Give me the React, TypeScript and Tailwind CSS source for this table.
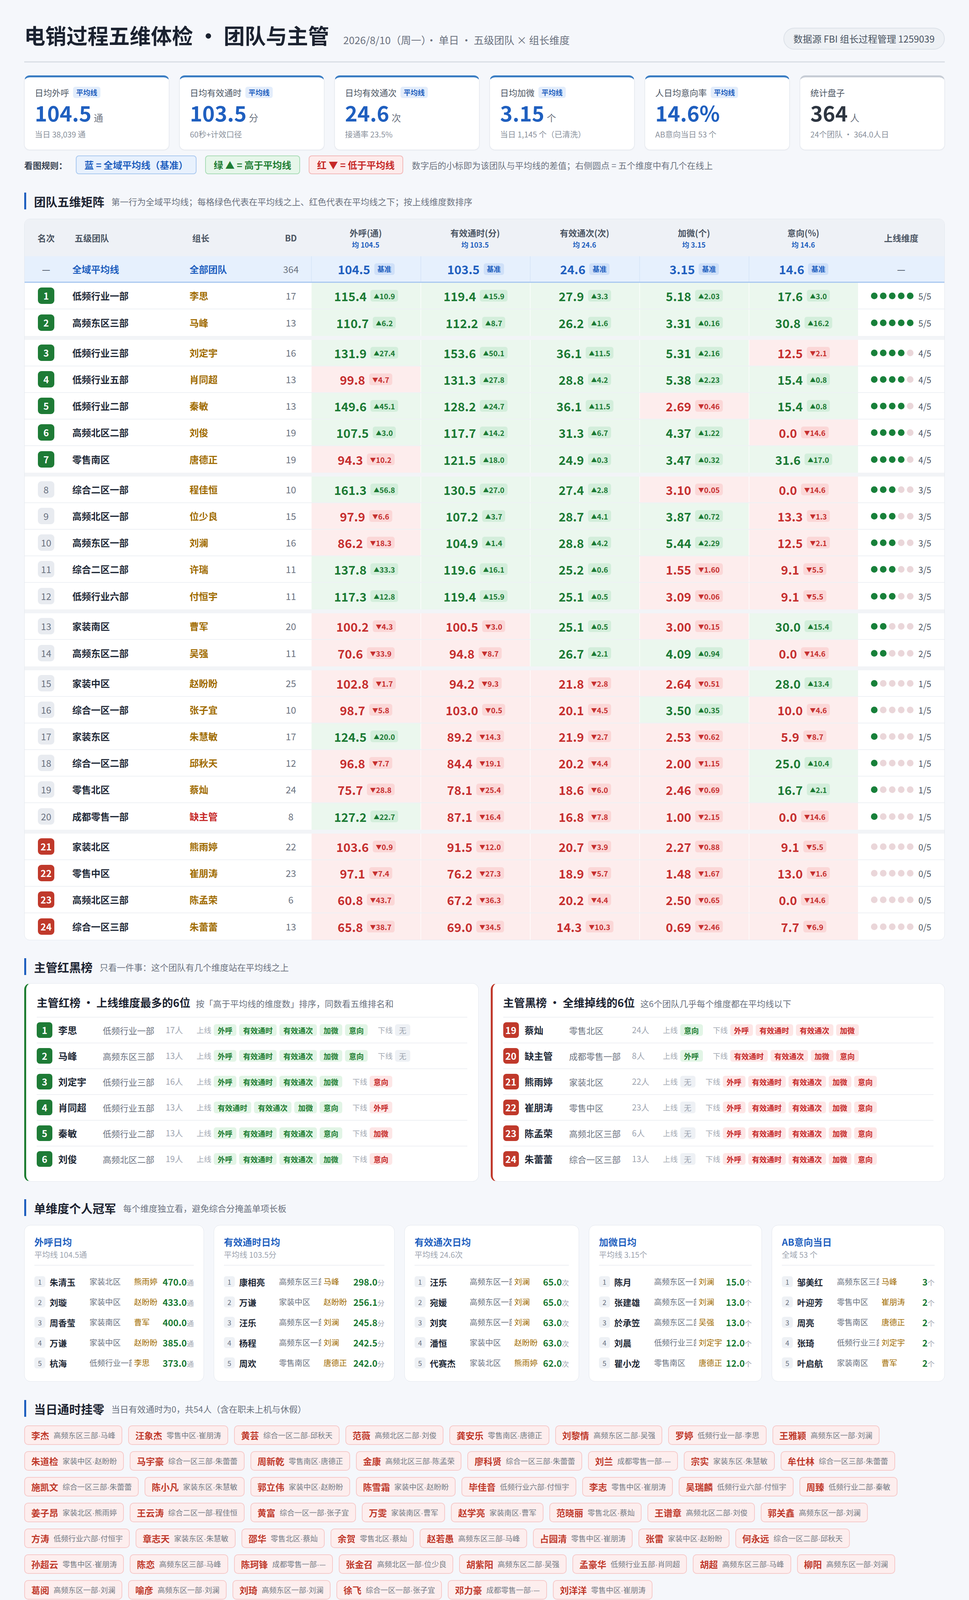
import React from "react";

type TRow = [number, string, string, number, string[]];

const TABLE: TRow[] = [
  [1, "低频行业一部", "李思", 17, ["115.4/+10.9", "119.4/+15.9", "27.9/+3.3", "5.18/+2.03", "17.6/+3.0"]],
  [2, "高频东区三部", "马峰", 13, ["110.7/+6.2", "112.2/+8.7", "26.2/+1.6", "3.31/+0.16", "30.8/+16.2"]],
  [3, "低频行业三部", "刘定宇", 16, ["131.9/+27.4", "153.6/+50.1", "36.1/+11.5", "5.31/+2.16", "12.5/-2.1"]],
  [4, "低频行业五部", "肖同超", 13, ["99.8/-4.7", "131.3/+27.8", "28.8/+4.2", "5.38/+2.23", "15.4/+0.8"]],
  [5, "低频行业二部", "秦敏", 13, ["149.6/+45.1", "128.2/+24.7", "36.1/+11.5", "2.69/-0.46", "15.4/+0.8"]],
  [6, "高频北区二部", "刘俊", 19, ["107.5/+3.0", "117.7/+14.2", "31.3/+6.7", "4.37/+1.22", "0.0/-14.6"]],
  [7, "零售南区", "唐德正", 19, ["94.3/-10.2", "121.5/+18.0", "24.9/+0.3", "3.47/+0.32", "31.6/+17.0"]],
  [8, "综合二区一部", "程佳恒", 10, ["161.3/+56.8", "130.5/+27.0", "27.4/+2.8", "3.10/-0.05", "0.0/-14.6"]],
  [9, "高频北区一部", "位少良", 15, ["97.9/-6.6", "107.2/+3.7", "28.7/+4.1", "3.87/+0.72", "13.3/-1.3"]],
  [10, "高频东区一部", "刘澜", 16, ["86.2/-18.3", "104.9/+1.4", "28.8/+4.2", "5.44/+2.29", "12.5/-2.1"]],
  [11, "综合二区二部", "许瑞", 11, ["137.8/+33.3", "119.6/+16.1", "25.2/+0.6", "1.55/-1.60", "9.1/-5.5"]],
  [12, "低频行业六部", "付恒宇", 11, ["117.3/+12.8", "119.4/+15.9", "25.1/+0.5", "3.09/-0.06", "9.1/-5.5"]],
  [13, "家装南区", "曹军", 20, ["100.2/-4.3", "100.5/-3.0", "25.1/+0.5", "3.00/-0.15", "30.0/+15.4"]],
  [14, "高频东区二部", "吴强", 11, ["70.6/-33.9", "94.8/-8.7", "26.7/+2.1", "4.09/+0.94", "0.0/-14.6"]],
  [15, "家装中区", "赵盼盼", 25, ["102.8/-1.7", "94.2/-9.3", "21.8/-2.8", "2.64/-0.51", "28.0/+13.4"]],
  [16, "综合一区一部", "张子宜", 10, ["98.7/-5.8", "103.0/-0.5", "20.1/-4.5", "3.50/+0.35", "10.0/-4.6"]],
  [17, "家装东区", "朱慧敏", 17, ["124.5/+20.0", "89.2/-14.3", "21.9/-2.7", "2.53/-0.62", "5.9/-8.7"]],
  [18, "综合一区二部", "邱秋天", 12, ["96.8/-7.7", "84.4/-19.1", "20.2/-4.4", "2.00/-1.15", "25.0/+10.4"]],
  [19, "零售北区", "蔡灿", 24, ["75.7/-28.8", "78.1/-25.4", "18.6/-6.0", "2.46/-0.69", "16.7/+2.1"]],
  [20, "成都零售一部", "缺主管", 8, ["127.2/+22.7", "87.1/-16.4", "16.8/-7.8", "1.00/-2.15", "0.0/-14.6"]],
  [21, "家装北区", "熊雨婷", 22, ["103.6/-0.9", "91.5/-12.0", "20.7/-3.9", "2.27/-0.88", "9.1/-5.5"]],
  [22, "零售中区", "崔朋涛", 23, ["97.1/-7.4", "76.2/-27.3", "18.9/-5.7", "1.48/-1.67", "13.0/-1.6"]],
  [23, "高频北区三部", "陈孟荣", 6, ["60.8/-43.7", "67.2/-36.3", "20.2/-4.4", "2.50/-0.65", "0.0/-14.6"]],
  [24, "综合一区三部", "朱蕾蕾", 13, ["65.8/-38.7", "69.0/-34.5", "14.3/-10.3", "0.69/-2.46", "7.7/-6.9"]],
];

const METRICS = [
  ["外呼(通)", "104.5"],
  ["有效通时(分)", "103.5"],
  ["有效通次(次)", "24.6"],
  ["加微(个)", "3.15"],
  ["意向(%)", "14.6"],
];

const KPIS = [
  { label: "日均外呼", avg: true, value: "104.5", unit: "通", sub: "当日 38,039 通" },
  { label: "日均有效通时", avg: true, value: "103.5", unit: "分", sub: "60秒+计效口径" },
  { label: "日均有效通次", avg: true, value: "24.6", unit: "次", sub: "接通率 23.5%" },
  { label: "日均加微", avg: true, value: "3.15", unit: "个", sub: "当日 1,145 个（已清洗）" },
  { label: "人日均意向率", avg: true, value: "14.6%", unit: "", sub: "AB意向当日 53 个" },
  { label: "统计盘子", avg: false, value: "364", unit: "人", sub: "24个团队 · 364.0人日" },
];

const ALL = ["外呼", "有效通时", "有效通次", "加微", "意向"];

const RED_LIST = [
  { rank: 1, name: "李思", team: "低频行业一部", count: "17人", ups: ALL, downs: [] as string[] },
  { rank: 2, name: "马峰", team: "高频东区三部", count: "13人", ups: ALL, downs: [] as string[] },
  { rank: 3, name: "刘定宇", team: "低频行业三部", count: "16人", ups: ["外呼", "有效通时", "有效通次", "加微"], downs: ["意向"] },
  { rank: 4, name: "肖同超", team: "低频行业五部", count: "13人", ups: ["有效通时", "有效通次", "加微", "意向"], downs: ["外呼"] },
  { rank: 5, name: "秦敏", team: "低频行业二部", count: "13人", ups: ["外呼", "有效通时", "有效通次", "意向"], downs: ["加微"] },
  { rank: 6, name: "刘俊", team: "高频北区二部", count: "19人", ups: ["外呼", "有效通时", "有效通次", "加微"], downs: ["意向"] },
];

const BLACK_LIST = [
  { rank: 19, name: "蔡灿", team: "零售北区", count: "24人", ups: ["意向"], downs: ["外呼", "有效通时", "有效通次", "加微"] },
  { rank: 20, name: "缺主管", team: "成都零售一部", count: "8人", ups: ["外呼"], downs: ["有效通时", "有效通次", "加微", "意向"] },
  { rank: 21, name: "熊雨婷", team: "家装北区", count: "22人", ups: [] as string[], downs: ALL },
  { rank: 22, name: "崔朋涛", team: "零售中区", count: "23人", ups: [] as string[], downs: ALL },
  { rank: 23, name: "陈孟荣", team: "高频北区三部", count: "6人", ups: [] as string[], downs: ALL },
  { rank: 24, name: "朱蕾蕾", team: "综合一区三部", count: "13人", ups: [] as string[], downs: ALL },
];

const CHAMPS = [
  {
    title: "外呼日均", sub: "平均线 104.5通", unit: "通",
    rows: [["朱清玉", "家装北区", "熊雨婷", "470.0"], ["刘璇", "家装中区", "赵盼盼", "433.0"], ["周香莹", "家装南区", "曹军", "400.0"], ["万谦", "家装中区", "赵盼盼", "385.0"], ["杭海", "低频行业一部", "李思", "373.0"]],
  },
  {
    title: "有效通时日均", sub: "平均线 103.5分", unit: "分",
    rows: [["康相亮", "高频东区三部", "马峰", "298.0"], ["万谦", "家装中区", "赵盼盼", "256.1"], ["汪乐", "高频东区一部", "刘澜", "245.8"], ["杨程", "高频东区一部", "刘澜", "242.5"], ["周欢", "零售南区", "唐德正", "242.0"]],
  },
  {
    title: "有效通次日均", sub: "平均线 24.6次", unit: "次",
    rows: [["汪乐", "高频东区一部", "刘澜", "65.0"], ["宛媛", "高频东区一部", "刘澜", "65.0"], ["刘爽", "高频东区一部", "刘澜", "63.0"], ["潘恒", "家装中区", "赵盼盼", "63.0"], ["代赛杰", "家装北区", "熊雨婷", "62.0"]],
  },
  {
    title: "加微日均", sub: "平均线 3.15个", unit: "个",
    rows: [["陈月", "高频东区一部", "刘澜", "15.0"], ["张建雄", "高频东区一部", "刘澜", "13.0"], ["於承笠", "高频东区二部", "吴强", "13.0"], ["刘晨", "低频行业三部", "刘定宇", "12.0"], ["瞿小龙", "零售南区", "唐德正", "12.0"]],
  },
  {
    title: "AB意向当日", sub: "全域 53 个", unit: "个",
    rows: [["邹美红", "高频东区三部", "马峰", "3"], ["叶迎芳", "零售中区", "崔朋涛", "2"], ["周亮", "零售南区", "唐德正", "2"], ["张琦", "低频行业三部", "刘定宇", "2"], ["叶启航", "家装南区", "曹军", "2"]],
  },
];

const ZERO = [
  ["李杰", "高频东区三部·马峰"], ["汪象杰", "零售中区·崔朋涛"], ["黄芸", "综合一区二部·邱秋天"], ["范薇", "高频北区二部·刘俊"],
  ["龚安乐", "零售南区·唐德正"], ["刘黎情", "高频东区二部·吴强"], ["罗婷", "低频行业一部·李思"], ["王雅颖", "高频东区一部·刘澜"],
  ["朱道检", "家装中区·赵盼盼"], ["马宇豪", "综合一区三部·朱蕾蕾"], ["周新乾", "零售南区·唐德正"], ["金康", "高频北区三部·陈孟荣"],
  ["廖科贤", "综合一区三部·朱蕾蕾"], ["刘兰", "成都零售一部·—"], ["宗实", "家装东区·朱慧敏"], ["牟仕林", "综合一区三部·朱蕾蕾"],
  ["施凯文", "综合一区三部·朱蕾蕾"], ["陈小凡", "家装东区·朱慧敏"], ["郭立伟", "家装中区·赵盼盼"], ["陈雪霜", "家装中区·赵盼盼"],
  ["毕佳音", "低频行业六部·付恒宇"], ["李志", "零售中区·崔朋涛"], ["吴瑞麟", "低频行业六部·付恒宇"], ["周臻", "低频行业二部·秦敏"],
  ["姜子昂", "家装北区·熊雨婷"], ["王云涛", "综合二区一部·程佳恒"], ["黄富", "综合一区一部·张子宜"], ["万雯", "家装南区·曹军"],
  ["赵学亮", "家装南区·曹军"], ["范晓丽", "零售北区·蔡灿"], ["王谱章", "高频北区二部·刘俊"], ["郭关鑫", "高频东区一部·刘澜"],
  ["方涛", "低频行业六部·付恒宇"], ["章志天", "家装东区·朱慧敏"], ["邵华", "零售北区·蔡灿"], ["余贺", "零售北区·蔡灿"],
  ["赵若愚", "高频东区三部·马峰"], ["占园清", "零售中区·崔朋涛"], ["张雷", "家装中区·赵盼盼"], ["何永远", "综合一区二部·邱秋天"],
  ["孙超云", "零售中区·崔朋涛"], ["陈恋", "高频东区三部·马峰"], ["陈珂锋", "成都零售一部·—"], ["张金召", "高频北区一部·位少良"],
  ["胡紫阳", "高频东区二部·吴强"], ["孟豪华", "低频行业五部·肖同超"], ["胡超", "高频东区三部·马峰"], ["柳阳", "高频东区一部·刘澜"],
  ["葛阅", "高频东区一部·刘澜"], ["喻彦", "高频东区一部·刘澜"], ["刘琦", "高频东区一部·刘澜"], ["徐飞", "综合一区一部·张子宜"],
  ["邓力豪", "成都零售一部·—"], ["刘洋洋", "零售中区·崔朋涛"],
];

const FOOT = [
  "口径说明：① 统计区间 2026/8/10（周一）· 单日，在编BD 364人、共364.0人日；日均一律按「实际工作日天数」摊薄，非自然天数。",
  "② 分色基准为「全域平均线」而非排名：外呼104.5通 / 有效通时103.5分 / 有效通次24.6次 / 加微3.15个 / 意向率14.6%，达到或超过即为绿色。",
  "③ 有效通时/通次取「通时–小时 / 通次–个」即60秒以上计效口径（合计 通时628.1小时、通次8,957次）。",
  "④ 加微字段存在单人单日异常尖峰，已剔除单日>50的脏数据（本期丢弃0行、0个），清洗后合计1,145个。",
  "⑤ 主管本人的通时/外呼不计入团队分子（组长不背个人过程指标）；成都零售一部暂无在编主管；意向维度团队列为「人日均AB意向率」。",
];

const GRID = "grid grid-cols-[110px_295px_225px_103px_repeat(5,280px)_1fr]";

function SectionTitle({ title, sub }: { title: string; sub: string }) {
  return (
    <div className="flex h-[43px] items-center border-l-[5px] border-[#1f5fbf] pl-[20px]">
      <h2 className="text-[30px] font-bold leading-none text-[#1b2230]">{title}</h2>
      <span className="ml-[18px] text-[22px] leading-none text-[#6b7280]">{sub}</span>
    </div>
  );
}

function upCount(cells: string[]) {
  return cells.filter((c) => c.split("/")[1].startsWith("+")).length;
}

function RankBadge({ rank, up }: { rank: number; up: number }) {
  const cls =
    up >= 4
      ? "bg-[#1e7b36] text-white font-bold"
      : up === 0
      ? "bg-[#c0392b] text-white font-bold"
      : "bg-[#e8ebf0] text-[#6b7280]";
  return (
    <span className={`flex h-[42px] w-[42px] items-center justify-center rounded-[9px] text-[24px] ${cls}`}>{rank}</span>
  );
}

function MetricCell({ cell }: { cell: string }) {
  const [v, d] = cell.split("/");
  const up = d.startsWith("+");
  return (
    <div
      className={`flex items-center justify-center gap-[10px] border-l-2 border-[#ffffffaa] ${
        up ? "bg-[#ebf7ee]" : "bg-[#fdeded]"
      }`}
    >
      <span className={`text-[31px] font-semibold leading-none ${up ? "text-[#1b7a34]" : "text-[#c62f2f]"}`}>{v}</span>
      <span
        className={`flex h-[30px] items-center rounded-[6px] px-[8px] text-[19px] font-semibold leading-none ${
          up ? "bg-[#d3eedb] text-[#1b7a34]" : "bg-[#fbd7d7] text-[#c62f2f]"
        }`}
      >
        <span className="text-[15px]">{up ? "▲" : "▼"}</span>
        {d.slice(1)}
      </span>
    </div>
  );
}

function TableRow({ row, last }: { row: TRow; last: boolean }) {
  const [rank, team, leader, bd, cells] = row;
  const up = upCount(cells);
  return (
    <div className={`${GRID} h-[68px] ${last ? "" : "border-b-2 border-[#eef1f5]"}`}>
      <div className="flex items-center justify-center">
        <RankBadge rank={rank} up={up} />
      </div>
      <div className="flex items-center pl-[12px] text-[24px] font-semibold text-[#1f2937]">{team}</div>
      <div
        className={`flex items-center pl-[17px] text-[24px] font-semibold ${
          leader === "缺主管" ? "text-[#c62828]" : "text-[#a06b00]"
        }`}
      >
        {leader}
      </div>
      <div className="flex items-center justify-center text-[24px] text-[#6b7280]">{bd}</div>
      {cells.map((c, i) => (
        <MetricCell key={i} cell={c} />
      ))}
      <div className="flex items-center justify-center gap-[12px]">
        <div className="flex gap-[6px]">
          {[0, 1, 2, 3, 4].map((i) => (
            <span key={i} className={`h-[17px] w-[17px] rounded-full ${i < up ? "bg-[#18803a]" : "bg-[#ead6d9]"}`} />
          ))}
        </div>
        <span className="text-[22px] text-[#4b5563]">{up}/5</span>
      </div>
    </div>
  );
}

function Matrix() {
  const groups: TRow[][] = [];
  let prev = -1;
  TABLE.forEach((r) => {
    const u = upCount(r[4]);
    if (u !== prev) {
      groups.push([]);
      prev = u;
    }
    groups[groups.length - 1].push(r);
  });
  return (
    <div className="mt-[24px] overflow-hidden rounded-[14px] border border-[#e3e7ee] bg-white">
      <div className={`${GRID} h-[95px] bg-[#eef1f6] text-[22px] font-semibold text-[#4b5563]`}>
        <div className="flex items-center justify-center">名次</div>
        <div className="flex items-center pl-[18px]">五级团队</div>
        <div className="flex items-center pl-[24px]">组长</div>
        <div className="flex items-center justify-center">BD</div>
        {METRICS.map(([n, a]) => (
          <div key={n} className="flex flex-col items-center justify-center gap-[4px]">
            <span className="leading-[30px]">{n}</span>
            <span className="text-[18px] leading-[24px] text-[#1f5fbf]">均 {a}</span>
          </div>
        ))}
        <div className="flex items-center justify-center">上线维度</div>
      </div>
      <div className={`${GRID} h-[68px] border-b-[3px] border-[#a9c8f0] bg-[#e6f0fd]`}>
        <div className="flex items-center justify-center text-[24px] text-[#374151]">—</div>
        <div className="flex items-center pl-[12px] text-[24px] font-bold text-[#1f5fbf]">全域平均线</div>
        <div className="flex items-center pl-[17px] text-[24px] font-bold text-[#1f5fbf]">全部团队</div>
        <div className="flex items-center justify-center text-[24px] text-[#6b7280]">364</div>
        {METRICS.map(([n, a]) => (
          <div key={n} className="flex items-center justify-center gap-[10px] border-l-2 border-[#d9e7f9]">
            <span className="text-[31px] font-bold leading-none text-[#1f5fbf]">{a}</span>
            <span className="flex h-[30px] items-center rounded-[6px] bg-[#cfe0f8] px-[8px] text-[18px] font-bold text-[#1f5fbf]">
              基准
            </span>
          </div>
        ))}
        <div className="flex items-center justify-center text-[24px] text-[#374151]">—</div>
      </div>
      {groups.map((g, gi) => (
        <div key={gi}>
          {gi > 0 && <div className="h-[10px] bg-[#f2f4f7]" />}
          {g.map((r, ri) => (
            <TableRow key={r[0]} row={r} last={ri === g.length - 1} />
          ))}
        </div>
      ))}
    </div>
  );
}

function Chip({ text, kind }: { text: string; kind: "up" | "down" | "none" }) {
  const cls =
    kind === "up"
      ? "bg-[#e2f5e6] text-[#1e7d32] font-semibold"
      : kind === "down"
      ? "bg-[#fde6e6] text-[#c62828] font-semibold"
      : "bg-[#eef1f5] text-[#9ca3af]";
  return <span className={`flex h-[30px] items-center rounded-[6px] px-[10px] text-[19px] leading-none ${cls}`}>{text}</span>;
}

type LItem = { rank: number; name: string; team: string; count: string; ups: string[]; downs: string[] };

function ListCard({
  title,
  sub,
  items,
  red,
}: {
  title: string;
  sub: string;
  items: LItem[];
  red: boolean;
}) {
  return (
    <div
      className={`rounded-[16px] border border-[#e3e7ee] border-l-[5px] bg-white pb-[25px] pl-[27px] pr-[28px] pt-[27px] ${
        red ? "border-l-[#c0392b]" : "border-l-[#1e7d32]"
      }`}
    >
      <div className="flex h-[36px] items-baseline">
        <span className="text-[28px] font-bold text-[#1b2230]">{title}</span>
        <span className="ml-[14px] text-[22px] text-[#6b7280]">{sub}</span>
      </div>
      <div className="mt-[22px]">
        {items.map((it) => (
          <div key={it.rank} className="flex h-[66px] items-center border-t-2 border-[#eef0f4]">
            <span
              className={`flex h-[40px] w-[40px] items-center justify-center rounded-[8px] text-[24px] font-bold text-white ${
                red ? "bg-[#c0392b]" : "bg-[#1e7b36]"
              }`}
            >
              {it.rank}
            </span>
            <span className="ml-[15px] w-[114px] text-[24px] font-bold text-[#1f2937]">{it.name}</span>
            <span className="w-[161px] text-[22px] text-[#6b7280]">{it.team}</span>
            <span className="w-[79px] text-[21px] text-[#9ca3af]">{it.count}</span>
            <span className="text-[19px] text-[#a3a9b3]">上线</span>
            <div className="ml-[6px] flex gap-[7px]">
              {it.ups.length ? it.ups.map((u) => <Chip key={u} text={u} kind="up" />) : <Chip text="无" kind="none" />}
            </div>
            <span className="ml-[26px] text-[19px] text-[#a3a9b3]">下线</span>
            <div className="ml-[6px] flex gap-[7px]">
              {it.downs.length ? it.downs.map((u) => <Chip key={u} text={u} kind="down" />) : <Chip text="无" kind="none" />}
            </div>
          </div>
        ))}
      </div>
    </div>
  );
}

function ChampCard({ c }: { c: (typeof CHAMPS)[number] }) {
  return (
    <div className="rounded-[16px] border border-[#e3e7ee] bg-white px-[25px] pb-[21px] pt-[27px]">
      <div className="h-[30px] text-[24px] font-bold leading-[30px] text-[#1f5fbf]">{c.title}</div>
      <div className="mt-[4px] h-[28px] text-[20px] leading-[28px] text-[#9ca3af]">{c.sub}</div>
      <div className="mt-[12px] border-t-2 border-[#eef0f4] pt-[15px]">
        {c.rows.map((r, i) => (
          <div key={i} className="flex h-[52px] items-center whitespace-nowrap">
            <span className="flex h-[28px] w-[28px] shrink-0 items-center justify-center rounded-[6px] bg-[#eef1f5] text-[18px] text-[#6b7280]">
              {i + 1}
            </span>
            <span className="ml-[11px] w-[92px] shrink-0 text-[22px] font-bold text-[#1f2937]">{r[0]}</span>
            <span className="ml-[10px] w-[108px] shrink-0 overflow-hidden text-[20px] text-[#6b7280]">{r[1]}</span>
            <span className="ml-[6px] shrink-0 text-[20px] text-[#a06b00]">{r[2]}</span>
            <span className="ml-auto flex items-baseline">
              <span className="text-[23px] font-bold text-[#1b7a34]">{r[3]}</span>
              <span className="text-[18px] text-[#9ca3af]">{c.unit}</span>
            </span>
          </div>
        ))}
      </div>
    </div>
  );
}

function ZeroChip({ name, sub }: { name: string; sub: string }) {
  const [team, leader] = sub.split("·");
  return (
    <div className="flex h-[50px] items-center gap-[11px] rounded-[10px] border-2 border-[#f6caca] bg-[#fdeeee] px-[16px]">
      <span className="text-[23px] font-bold leading-none text-[#c0392b]">{name}</span>
      <span className="whitespace-nowrap text-[19px] leading-none text-[#737a84]">
        {team}
        <span className="font-['Liberation_Sans',sans-serif]">·</span>
        {leader}
      </span>
    </div>
  );
}

export default function App() {
  return (
    <div className="overflow-hidden bg-[#f5f7fb] px-[62px] pb-[68px] pt-[63px] font-['Noto_Sans_CJK_SC','Noto_Sans',sans-serif] text-[#1f2937]">
      {/* Header */}
      <div className="flex h-[64px] items-start justify-between">
        <div className="flex items-baseline">
          <h1 className="text-[54px] font-bold leading-none text-[#1b2230]">电销过程五维体检 · 团队与主管</h1>
          <span className="ml-[36px] text-[26px] leading-none text-[#6b7280]">2026/8/10（周一）· 单日 · 五级团队 × 组长维度</span>
        </div>
        <div className="mt-[8px] flex h-[56px] items-center rounded-full border-2 border-[#dde2e9] bg-[#eef1f5] px-[24px] text-[24px] text-[#4b5563]">
          数据源 FBI 组长过程管理 1259039
        </div>
      </div>
      <div className="mt-[30px] h-[3px] bg-[#d9dee5]" />

      {/* KPI cards */}
      <div className="mt-[33px] grid grid-cols-6 gap-[26px]">
        {KPIS.map((k) => (
          <div
            key={k.label}
            className={`h-[191px] rounded-[14px] border border-[#e2e6ed] border-t-[5px] bg-white px-[26px] pt-[23px] shadow-[0_1px_3px_rgba(16,24,40,0.06)] ${
              k.avg ? "border-t-[#3a7dc3]" : "border-t-[#c6ccd5]"
            }`}
          >
            <div className="flex h-[30px] items-center gap-[10px]">
              <span className="text-[22px] text-[#4b5563]">{k.label}</span>
              {k.avg && (
                <span className="rounded-[6px] bg-[#e3edfb] px-[8px] py-[1px] text-[18px] font-bold text-[#1f5fbf]">平均线</span>
              )}
            </div>
            <div className="mt-[7px] flex h-[60px] items-baseline gap-[6px]">
              <span className={`text-[54px] font-bold leading-[60px] ${k.avg ? "text-[#1f5fbf]" : "text-[#2d3540]"}`}>{k.value}</span>
              {k.unit && <span className="text-[24px] text-[#6b7280]">{k.unit}</span>}
            </div>
            <div className="mt-[12px] h-[28px] text-[20px] leading-[28px] text-[#8a919c]">{k.sub}</div>
          </div>
        ))}
      </div>

      {/* Legend */}
      <div className="mt-[14px] flex h-[48px] items-center gap-[22px]">
        <span className="text-[22px] font-bold text-[#374151]">看图规则：</span>
        <span className="flex h-[48px] items-center rounded-[8px] border-2 border-[#aac9f0] bg-[#e8f1fd] px-[20px] text-[24px] font-semibold text-[#1f5fbf]">
          蓝 = 全域平均线（基准）
        </span>
        <span className="flex h-[48px] items-center rounded-[8px] border-2 border-[#a9dcb6] bg-[#e6f6ea] px-[20px] text-[24px] font-semibold text-[#1e7d32]">
          绿 ▲ = 高于平均线
        </span>
        <span className="flex h-[48px] items-center rounded-[8px] border-2 border-[#f2b9b9] bg-[#fdecec] px-[20px] text-[24px] font-semibold text-[#c62828]">
          红 ▼ = 低于平均线
        </span>
        <span className="text-[22px] text-[#6b7280]">数字后的小标即为该团队与平均线的差值；右侧圆点 = 五个维度中有几个在线上</span>
      </div>

      {/* Matrix */}
      <div className="mt-[47px]">
        <SectionTitle title="团队五维矩阵" sub="第一行为全域平均线；每格绿色代表在平均线之上、红色代表在平均线之下；按上线维度数排序" />
      </div>
      <Matrix />

      {/* Red / Black lists */}
      <div className="mt-[46px]">
        <SectionTitle title="主管红黑榜" sub="只看一件事：这个团队有几个维度站在平均线之上" />
      </div>
      <div className="mt-[21px] grid grid-cols-2 gap-[31px]">
        <ListCard title="主管红榜 · 上线维度最多的6位" sub="按「高于平均线的维度数」排序，同数看五维排名和" items={RED_LIST} red={false} />
        <ListCard title="主管黑榜 · 全维掉线的6位" sub="这6个团队几乎每个维度都在平均线以下" items={BLACK_LIST} red={true} />
      </div>

      {/* Champions */}
      <div className="mt-[45px]">
        <SectionTitle title="单维度个人冠军" sub="每个维度独立看，避免综合分掩盖单项长板" />
      </div>
      <div className="mt-[23px] grid grid-cols-[460px_463px_447px_443px_1fr] gap-[25px]">
        {CHAMPS.map((c) => (
          <ChampCard key={c.title} c={c} />
        ))}
      </div>

      {/* Zero */}
      <div className="mt-[47px]">
        <SectionTitle title="当日通时挂零" sub="当日有效通时为0，共54人（含在职未上机与休假）" />
      </div>
      <div className="mt-[22px] flex flex-wrap gap-x-[15px] gap-y-[16px]">
        {ZERO.map(([n, s]) => (
          <ZeroChip key={n} name={n} sub={s} />
        ))}
      </div>

      {/* Footer */}
      <div className="mt-[46px] border-t-2 border-[#dfe3e9] pt-[24px] text-[22px] text-[#6b7280]">
        {FOOT.map((t, i) => (
          <div key={i} className="flex h-[39px] items-center whitespace-nowrap leading-none">
            {t}
          </div>
        ))}
      </div>
    </div>
  );
}
